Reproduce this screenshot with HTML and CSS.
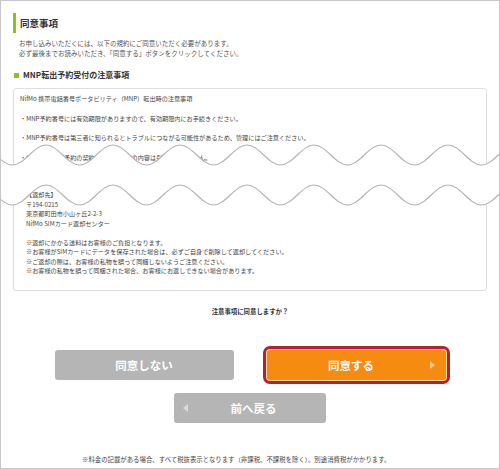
FILE: index.html
```html
<!DOCTYPE html>
<html lang="ja">

<head>
    <meta charset="UTF-8">
    <meta name="viewport" content="width=device-width, initial-scale=1.0">
    <title>同意事項</title>
    <link rel="stylesheet" href="styles.css">
</head>

<body>
    <div class="frame">
        <h1 class="title">同意事項</h1>
        <p class="lead">お申し込みいただくには、以下の規約にご同意いただく必要があります。<br>必ず最後までお読みいただき、「同意する」ボタンをクリックしてください。</p>

        <h2 class="subtitle">MNP転出予約受付の注意事項</h2>

        <!-- Terms box -->
        <div class="terms">
            <div class="terms-top">
                <p>NifMo 携帯電話番号ポータビリティ（MNP）転出時の注意事項</p>
                <p>・MNP予約番号には有効期限がありますので、有効期限内にお手続きください。</p>
                <p>・MNP予約番号は第三者に知られるとトラブルにつながる可能性があるため、管理にはご注意ください。</p>
                <p>・終了したMNP予約の契約には、前回分の内容は引き継がれません。</p>
            </div>
            <div class="terms-bottom">
                <p>【返却先】<br>〒194-0215<br>東京都町田市小山ヶ丘2-2-3<br>NifMo SIMカード返却センター</p>
                <p>※返却にかかる送料はお客様のご負担となります。<br>※お客様がSIMカードにデータを保存された場合は、必ずご自身で削除して返却してください。<br>※ご返却の際は、お客様の私物を誤って同梱しないようご注意ください。<br>※お客様の私物を誤って同梱された場合、お客様にお返しできない場合があります。</p>
            </div>
        </div>

        <p class="question">注意事項に同意しますか？</p>

        <div class="actions">
            <button class="btn btn-gray">同意しない</button>
            <button class="btn btn-agree">同意する</button>
        </div>
        <div class="actions back-row">
            <button class="btn btn-gray btn-back">前へ戻る</button>
        </div>

        <p class="note">※料金の記載がある場合、すべて税抜表示となります（非課税、不課税を除く）。別途消費税がかかります。</p>

        <!-- Cut mark laid over the terms box -->
        <svg class="cut" width="500" height="70" viewBox="0 0 500 70">
            <path fill="#fff" d="M-21,5 c12.2,0 21.3,20 33.5,20 s21.3,-20 33.5,-20 s21.3,20 33.5,20 s21.3,-20 33.5,-20 s21.3,20 33.5,20 s21.3,-20 33.5,-20 s21.3,20 33.5,20 s21.3,-20 33.5,-20 s21.3,20 33.5,20 s21.3,-20 33.5,-20 s21.3,20 33.5,20 s21.3,-20 33.5,-20 s21.3,20 33.5,20 s21.3,-20 33.5,-20 s21.3,20 33.5,20 s21.3,-20 33.5,-20 L515,45 c-12.2,0 -21.3,20 -33.5,20 s-21.3,-20 -33.5,-20 s-21.3,20 -33.5,20 s-21.3,-20 -33.5,-20 s-21.3,20 -33.5,20 s-21.3,-20 -33.5,-20 s-21.3,20 -33.5,20 s-21.3,-20 -33.5,-20 s-21.3,20 -33.5,20 s-21.3,-20 -33.5,-20 s-21.3,20 -33.5,20 s-21.3,-20 -33.5,-20 s-21.3,20 -33.5,20 s-21.3,-20 -33.5,-20 s-21.3,20 -33.5,20 s-21.3,-20 -33.5,-20 Z" />
            <path fill="none" stroke="#b2b2b2" stroke-width="1.2" d="M-21,5 c12.2,0 21.3,20 33.5,20 s21.3,-20 33.5,-20 s21.3,20 33.5,20 s21.3,-20 33.5,-20 s21.3,20 33.5,20 s21.3,-20 33.5,-20 s21.3,20 33.5,20 s21.3,-20 33.5,-20 s21.3,20 33.5,20 s21.3,-20 33.5,-20 s21.3,20 33.5,20 s21.3,-20 33.5,-20 s21.3,20 33.5,20 s21.3,-20 33.5,-20 s21.3,20 33.5,20 s21.3,-20 33.5,-20" />
            <path fill="none" stroke="#b2b2b2" stroke-width="1.2" d="M-21,45 c12.2,0 21.3,20 33.5,20 s21.3,-20 33.5,-20 s21.3,20 33.5,20 s21.3,-20 33.5,-20 s21.3,20 33.5,20 s21.3,-20 33.5,-20 s21.3,20 33.5,20 s21.3,-20 33.5,-20 s21.3,20 33.5,20 s21.3,-20 33.5,-20 s21.3,20 33.5,20 s21.3,-20 33.5,-20 s21.3,20 33.5,20 s21.3,-20 33.5,-20 s21.3,20 33.5,20 s21.3,-20 33.5,-20" />
        </svg>
    </div>
</body>

</html>
```

FILE: styles.css
```css
* {
    margin: 0;
    padding: 0;
    box-sizing: border-box;
    font-family: 'Noto Sans CJK JP', 'Noto Sans', sans-serif;
}

body {
    background: #fff;
    color: #444;
}

.frame {
    position: relative;
    width: 500px;
    height: 469px;
    border: 1px solid #c8c8c8;
    padding: 0 12px;
    overflow: hidden;
}

.title {
    margin-top: 12px;
    height: 20px;
    line-height: 20px;
    border-left: 3px solid #8dc21f;
    padding-left: 4px;
    font-size: 9.5px;
    font-weight: 700;
    color: #333;
}

.lead {
    margin-top: 6px;
    padding-left: 6px;
    font-size: 6.5px;
    line-height: 9.5px;
    color: #555;
}

.subtitle {
    margin-top: 12px;
    height: 10px;
    line-height: 10px;
    font-size: 8px;
    font-weight: 700;
    color: #333;
    display: flex;
    align-items: center;
}

.subtitle:before {
    content: '';
    width: 5px;
    height: 5px;
    margin: 0 4px 0 1px;
    background-color: #8dc21f;
}

.terms {
    margin-top: 8px;
    border: 1px solid #dedede;
    border-radius: 3px;
    padding: 5px 6px 14px;
    font-size: 6.15px;
    color: #444;
}

.terms-top p {
    line-height: 9.75px;
    margin-bottom: 9.75px;
}

.terms-top p:last-child {
    margin-bottom: 0;
}

.terms-bottom {
    margin-top: 28px;
    padding-left: 6px;
}

.terms-bottom p {
    line-height: 9.5px;
}

.terms-bottom p + p {
    margin-top: 9.5px;
}

.question {
    margin-top: 16px;
    text-align: center;
    font-size: 6.4px;
    line-height: 10px;
    font-weight: 700;
    color: #333;
}

.actions {
    display: flex;
    justify-content: center;
    gap: 33px;
    margin-top: 33px;
}

.back-row {
    margin-top: 13px;
}

.btn {
    position: relative;
    width: 179px;
    height: 30px;
    border: none;
    border-radius: 3px;
    color: #fff;
    font-size: 11.5px;
    font-weight: 700;
    cursor: pointer;
}

.btn-gray {
    background-color: #b5b5b5;
}

.btn-agree {
    background-color: #f68b12;
    padding-right: 10px;
    box-shadow: 0 0 0 1px #fbd7ad, 0 0 0 4px #b8202a;
}

.btn-agree:after {
    content: '';
    position: absolute;
    right: 11px;
    top: 11px;
    border-style: solid;
    border-width: 4px 0 4px 5px;
    border-color: transparent transparent transparent #fcc689;
}

.btn-back {
    width: 152px;
    padding-left: 7px;
}

.btn-back:after {
    content: '';
    position: absolute;
    left: 9px;
    top: 11px;
    border-style: solid;
    border-width: 4px 5px 4px 0;
    border-color: transparent #dadada transparent transparent;
}

.note {
    margin-top: 32px;
    padding-left: 69px;
    font-size: 6.4px;
    line-height: 10px;
    color: #444;
}

.cut {
    position: absolute;
    left: -1px;
    top: 139px;
}
```
